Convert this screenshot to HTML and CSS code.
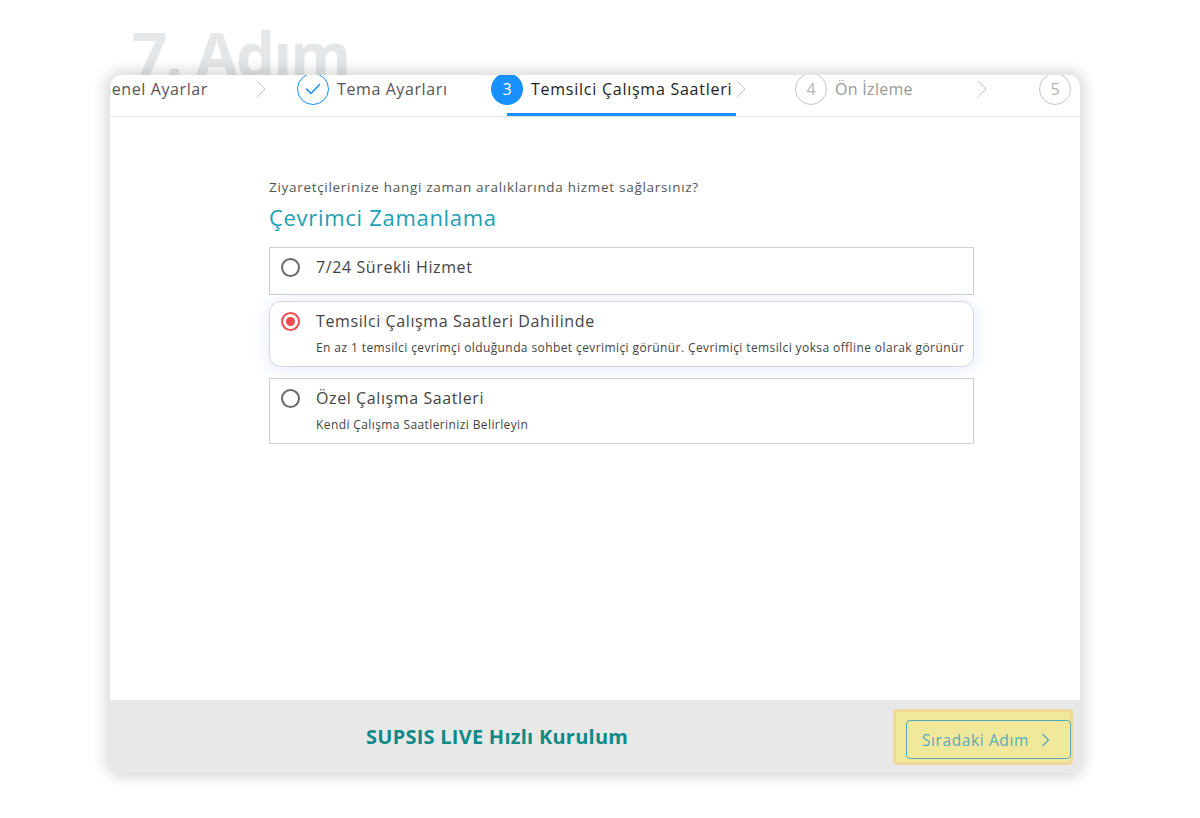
FILE: index.html
```html
<!doctype html>
<html lang="tr">
<head>
	<meta charset="UTF-8">
	<title>Hızlı Kurulum</title>
	<link rel="stylesheet" href="styles.css">
</head>
<body>
	<div class="page">
		<div class="step-no">7. Adım</div>
		<div class="wizard">
			<div class="steps">
				<div class="steps-track">
					<div class="step step-1">
						<span class="step-title done">Genel Ayarlar</span>
						<svg class="chev" width="10" height="18" viewBox="0 0 10 18"><polyline points="1,1 9,9 1,17" fill="none" stroke="#c4c4c4" stroke-width="1"/></svg>
					</div>
					<div class="step step-2">
						<span class="dot dot-done">
							<svg width="16" height="12" viewBox="0 0 16 12"><polyline points="1.5,6 6,10.5 14.5,1.5" fill="none" stroke="#1890ff" stroke-width="1.6" stroke-linecap="round" stroke-linejoin="round"/></svg>
						</span>
						<span class="step-title done">Tema Ayarları</span>
					</div>
					<div class="step step-3 active">
						<span class="dot dot-active">3</span>
						<span class="step-title current">Temsilci Çalışma Saatleri</span>
						<svg class="chev" width="10" height="18" viewBox="0 0 10 18"><polyline points="1,1 9,9 1,17" fill="none" stroke="#c4c4c4" stroke-width="1"/></svg>
					</div>
					<div class="step step-4">
						<span class="dot dot-wait">4</span>
						<span class="step-title wait">Ön İzleme</span>
						<svg class="chev" width="10" height="18" viewBox="0 0 10 18"><polyline points="1,1 9,9 1,17" fill="none" stroke="#c4c4c4" stroke-width="1"/></svg>
					</div>
					<div class="step step-5">
						<span class="dot dot-wait">5</span>
					</div>
				</div>
			</div>

			<div class="content">
				<p class="question">Ziyaretçilerinize hangi zaman aralıklarında hizmet sağlarsınız?</p>
				<h2 class="section-title">Çevrimci Zamanlama</h2>

				<div class="option option-short">
					<span class="radio"></span>
					<div class="option-text">
						<div class="option-title">7/24 Sürekli Hizmet</div>
					</div>
				</div>
				<div class="option checked">
					<span class="radio"></span>
					<div class="option-text">
						<div class="option-title">Temsilci Çalışma Saatleri Dahilinde</div>
						<div class="option-desc">En az 1 temsilci çevrimçi olduğunda sohbet çevrimiçi görünür. Çevrimiçi temsilci yoksa offline olarak görünür</div>
					</div>
				</div>
				<div class="option">
					<span class="radio"></span>
					<div class="option-text">
						<div class="option-title">Özel Çalışma Saatleri</div>
						<div class="option-desc">Kendi Çalışma Saatlerinizi Belirleyin</div>
					</div>
				</div>
			</div>

			<div class="footer">
				<div class="brand">SUPSIS LIVE Hızlı Kurulum</div>
				<div class="highlight">
					<a href="javascript:;" class="next-btn">Sıradaki Adım
						<svg width="9" height="14" viewBox="0 0 9 14"><polyline points="1.5,1 7.5,7 1.5,13" fill="none" stroke="#5aaabb" stroke-width="1.3"/></svg>
					</a>
				</div>
			</div>
		</div>
	</div>
</body>
</html>
```

FILE: styles.css
```css
*{margin: 0;padding: 0;box-sizing: border-box;}
body{background: #fff; font-family: "Open Sans", "Liberation Sans", sans-serif; color: #444;}
.page{width: 1200px; height: 818px; overflow: hidden;}

.step-no{font-size: 62px; font-weight: 700; color: #e5e6e8; line-height: 70px; margin-left: 132px; padding-top: 19px; letter-spacing: -2px; height: 89px;}

.wizard{position: relative; width: 970px; height: 698px; margin: -14px 0 0 110px; background: #fff; border-radius: 12px; overflow: hidden;
	box-shadow: 0 0 14px 5px rgba(0,0,0,0.14); display: flex; flex-direction: column;}

/* steps bar */
.steps{height: 42px; border-bottom: 1px solid #e6e6e6; overflow: hidden; flex: none;}
.steps-track{display: flex; margin: -2px 0 0 -33px; height: 43px;}
.step{display: flex; align-items: flex-start; height: 43px; flex: none; position: relative;}
.step-1{width: 220px; justify-content: flex-end;}
.step-1 .chev{margin: 7px 31px 0 48px;}
.step-2{width: 194px;}
.step-3{width: 304px;}
.step-3 .chev{margin: 7px 0 0 4px;}
.step-4{width: 244px;}
.step-4 .chev{margin: 7px 52px 0 auto;}
.step-5{width: 40px;}
.step-3.active:after{content: ""; position: absolute; left: 16px; bottom: 0; width: 229px; height: 3px; background: #1890ff;}

.dot{width: 32px; height: 32px; border-radius: 50%; display: flex; align-items: center; justify-content: center; font-size: 16px; flex: none;}
.dot-done{border: 1px solid #1890ff;}
.dot-active{background: #1890ff; color: #fff;}
.dot-wait{border: 1px solid #c6c6c6; color: #b5b5b5;}
.step-title{font-size: 16px; line-height: 32px; margin-left: 8px; white-space: nowrap; letter-spacing: 0.6px;}
.step-title.done{color: #555;}
.step-title.current{color: #222; font-weight: 500; letter-spacing: 0.75px;}
.step-title.wait{color: #999; letter-spacing: 0.3px;}

/* content */
.content{flex: 1; padding: 60px 0 0 159px;}
.question{font-size: 13.5px; line-height: 20px; color: #555; letter-spacing: 0.7px;}
.section-title{font-size: 22px; font-weight: 500; line-height: 30px; margin-top: 5px; color: #1b9fb5; letter-spacing: 0.7px;}

.option{width: 705px; display: flex; align-items: flex-start; border: 1px solid #cfcfcf; padding: 7px 8px 9px 11px; margin-top: 11px; background: #fff;}
.option-short{margin-top: 15px; padding-bottom: 15px;}
.option.checked{border-radius: 12px; border-color: #d6d6dc; margin-top: 6px; margin-bottom: 11px;
	box-shadow: 0 2px 18px rgba(80,120,230,0.16);}
.option.checked + .option{margin-top: 0;}
.radio{width: 19px; height: 19px; border-radius: 50%; border: 2px solid #6a6a6a; margin-top: 3px; flex: none; display: flex; align-items: center; justify-content: center;}
.checked .radio{border-color: #f24b51;}
.checked .radio:before{content: ""; width: 9px; height: 9px; border-radius: 50%; background: #f24b51;}
.option-text{margin-left: 16px;}
.option-title{font-size: 16px; line-height: 24px; color: #444; letter-spacing: 0.6px;}
.option-desc{font-size: 12px; line-height: 18px; margin-top: 6px; color: #444; white-space: nowrap; letter-spacing: 0.4px;}

/* footer */
.footer{height: 73px; flex: none; background: #e8e8e8; display: flex; align-items: center;}
.brand{margin-left: 256px; font-size: 20px; font-weight: 700; color: #0f8a86; letter-spacing: 0.25px;}
.highlight{margin: 1px 7px 0 auto; background: #f0e89b; border: 3px solid #efd898; border-radius: 4px; padding: 8px 0 3px 10px; width: 180px; height: 56px;}
.next-btn{display: flex; align-items: center; width: 165px; height: 39px; border: 1px solid #5aaabb; border-radius: 4px;
	padding: 0 0 0 15px; font-size: 15.5px; color: #5aaabb; text-decoration: none; letter-spacing: 0.6px;}
.next-btn svg{margin-left: 12px;}
```
